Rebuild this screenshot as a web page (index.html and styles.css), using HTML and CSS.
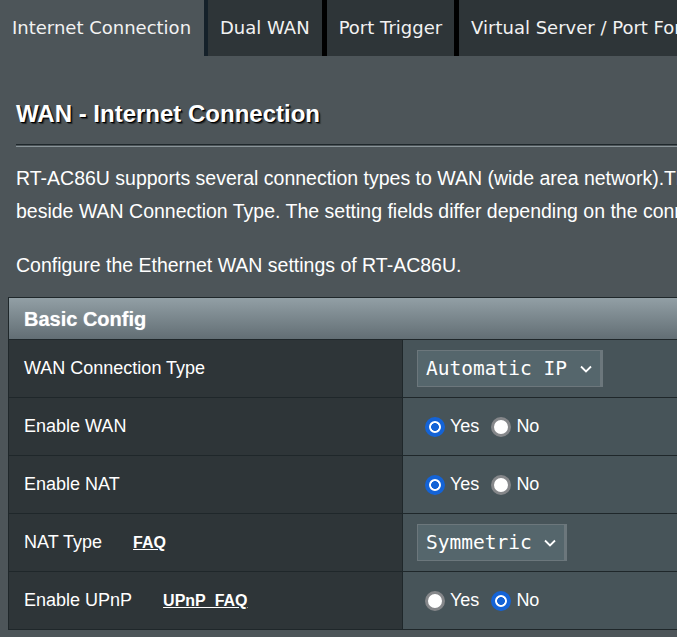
FILE: index.html
```html
<!DOCTYPE html>
<html>
<head>
<meta charset="utf-8">
<link rel="stylesheet" href="styles.css">
</head>
<body>
<nav class="tabs">
  <div class="tab active">Internet Connection</div>
  <div class="tab sep-teal">Dual WAN</div>
  <div class="tab">Port Trigger</div>
  <div class="tab">Virtual Server / Port Forwarding</div>
</nav>
<main class="main">
  <h1 class="title">WAN - Internet Connection</h1>
  <div class="divider"></div>
  <p class="desc">RT-AC86U supports several connection types to WAN (wide area network).These types are selected from the dropdown menu<br>beside WAN Connection Type. The setting fields differ depending on the connection type you selected.</p>
  <p class="desc desc2">Configure the Ethernet WAN settings of RT-AC86U.</p>
  <div class="config">
    <div class="config-head">Basic Config</div>
    <div class="row">
      <div class="label">WAN Connection Type</div>
      <div class="value">
        <div class="select sel-wide"><span>Automatic IP</span><svg class="chev" width="12" height="8" viewBox="0 0 12 8"><path d="M1 1.5 L6 6.5 L11 1.5" fill="none" stroke="#ffffff" stroke-width="1.8"/></svg></div>
      </div>
    </div>
    <div class="row">
      <div class="label">Enable WAN</div>
      <div class="value">
        <span class="opt"><span class="radio on"></span><span>Yes</span></span>
        <span class="opt"><span class="radio"></span><span>No</span></span>
      </div>
    </div>
    <div class="row">
      <div class="label">Enable NAT</div>
      <div class="value">
        <span class="opt"><span class="radio on"></span><span>Yes</span></span>
        <span class="opt"><span class="radio"></span><span>No</span></span>
      </div>
    </div>
    <div class="row">
      <div class="label">NAT Type <a class="faq">FAQ</a></div>
      <div class="value">
        <div class="select sel-narrow"><span>Symmetric</span><svg class="chev" width="12" height="8" viewBox="0 0 12 8"><path d="M1 1.5 L6 6.5 L11 1.5" fill="none" stroke="#ffffff" stroke-width="1.8"/></svg></div>
      </div>
    </div>
    <div class="row">
      <div class="label">Enable UPnP <a class="faq faq2">UPnP&nbsp;&nbsp;FAQ</a></div>
      <div class="value">
        <span class="opt"><span class="radio"></span><span>Yes</span></span>
        <span class="opt"><span class="radio on"></span><span>No</span></span>
      </div>
    </div>
  </div>
</main>
</body>
</html>
```
FILE: styles.css
```css
html, body {
  margin: 0;
  padding: 0;
  background: #4d5559;
  overflow: hidden;
  width: 677px;
  height: 637px;
}
body {
  font-family: "Liberation Sans", Arial, sans-serif;
  color: #ffffff;
}
.tabs {
  display: flex;
  height: 56px;
  white-space: nowrap;
}
.tab {
  font-family: "DejaVu Sans", Verdana, sans-serif;
  font-size: 18px;
  line-height: 56px;
  padding: 0 12px;
  background: #2e3538;
  color: #f2f2f2;
  border-left: 5px solid #000000;
  flex: none;
}
.tab.active {
  background: #4d5559;
  border-left: none;
  padding-right: 12px;
  width: 180px;
}
.tab.sep-teal {
  border-left: 4px solid #15212a;
}
.main {
  padding-left: 8px;
}
.title {
  margin: 43px 0 0 8px;
  font-size: 24px;
  line-height: 30px;
  font-weight: bold;
  color: #ffffff;
  text-shadow: 1px 1px 0 #000000, 2px 2px 1px rgba(0,0,0,0.5);
}
.divider {
  margin: 15px 0 0 8px;
  height: 1px;
  border-top: 1px solid #1e272b;
  border-bottom: 1px solid #8a959a;
}
.desc {
  margin: 15px 0 0 8px;
  font-size: 19.5px;
  line-height: 33px;
  white-space: nowrap;
  color: #ffffff;
}
.desc2 {
  margin-top: 21px;
}
.config {
  margin-top: 15px;
  width: 760px;
  border: 1px solid #1f272a;
  background: #1f272a;
}
.config-head {
  height: 41px;
  line-height: 42px;
  padding-left: 15px;
  font-size: 20px;
  font-weight: bold;
  background: linear-gradient(#929fa5, #626e74);
  border-bottom: 1px solid #1f272a;
  text-shadow: 0 0 1px rgba(255,255,255,0.6);
}
.row {
  display: flex;
  height: 57px;
  border-bottom: 1px solid #1f272a;
}
.row:last-child {
  border-bottom: none;
}
.label {
  width: 378px;
  padding-left: 15px;
  background: #2e3538;
  border-right: 1px solid #1f272a;
  display: flex;
  align-items: center;
  font-size: 18px;
}
.value {
  flex: 1;
  background: #475459;
  display: flex;
  align-items: center;
  padding-left: 14px;
  font-size: 18px;
}
.faq {
  font-size: 16px;
  font-weight: bold;
  text-decoration: underline;
  margin-left: 31px;
  color: #ffffff;
}
.select {
  box-sizing: border-box;
  height: 37px;
  display: flex;
  align-items: center;
  padding-left: 8px;
  background: #55666c;
  border: 1px solid #6c777c;
  border-right: 3px solid #6c777c;
  font-family: "DejaVu Sans Mono", monospace;
  font-size: 19.5px;
  color: #ffffff;
}
.sel-wide { width: 186px; }
.sel-narrow { width: 150px; }
.chev {
  margin-left: auto;
  margin-right: 8px;
}
.opt {
  display: flex;
  align-items: center;
  margin-left: 8px;
  margin-right: 12px;
}
.opt + .opt {
  margin-left: 0;
}
.radio {
  box-sizing: border-box;
  width: 20px;
  height: 20px;
  margin-right: 5px;
  border-radius: 50%;
  border: 3px solid #85878a;
  background: #ffffff;
  flex: none;
}
.radio.on {
  border: 4px solid #1463d6;
  background: radial-gradient(circle, #1463d6 0 3.6px, #ffffff 4.2px);
}
```
